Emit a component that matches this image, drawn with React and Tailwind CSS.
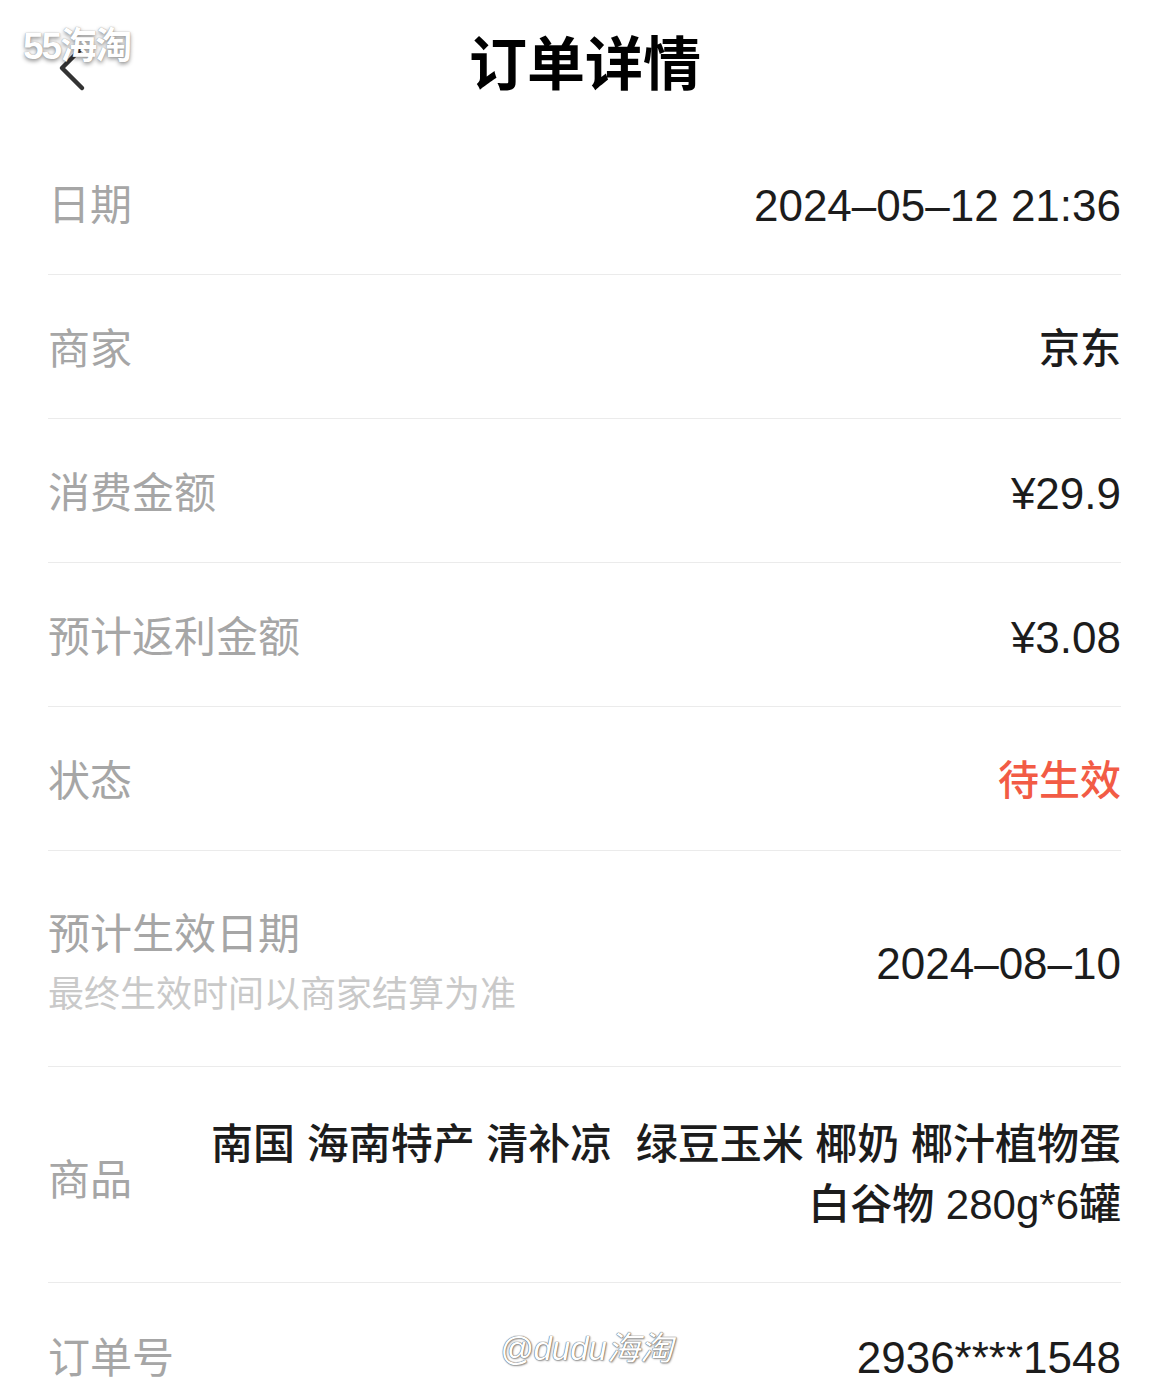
const rows = [
  { label: '日期', value: '2024–05–12 21:36' },
  { label: '商家', value: '京东', cjk: true },
  { label: '消费金额', value: '¥29.9' },
  { label: '预计返利金额', value: '¥3.08' },
  { label: '状态', value: '待生效', red: true, cjk: true },
]

export default function App() {
  return (
    <div
      className="relative w-[1170px] h-[1397px] overflow-hidden bg-white"
      style={{ fontFamily: '"Liberation Sans", "Noto Sans CJK SC", sans-serif' }}
    >
      {/* watermark top-left */}
      <div className="absolute left-[23px] top-[19px] text-[37px] font-bold tracking-[-2px] text-white [text-shadow:0_0_1px_#888,0_2px_4px_rgba(0,0,0,0.45)] z-10">
        55海淘
      </div>

      {/* header */}
      <div className="relative h-[131px] flex items-center justify-center">
        <button className="absolute left-[44px] top-[40px]">
          <svg width="52" height="56" viewBox="0 0 52 56" fill="none">
            <path d="M38 8 L18 28 L38 48" stroke="#333" strokeWidth="4.5" strokeLinecap="round" strokeLinejoin="round" />
          </svg>
        </button>
        <h1 className="text-[58px] font-bold text-black -mt-[2px]">订单详情</h1>
      </div>

      <div className="pl-[48px] pr-[49px]">
        {rows.map(r => (
          <div key={r.label} className="h-[144px] pt-[6px] flex items-center justify-between border-b border-[#ebebeb]">
            <span className="text-[42px] text-[#a6a6a6]">{r.label}</span>
            <span
              className={`font-medium ${r.cjk ? 'text-[41px]' : 'text-[44px]'} ${
                r.red ? 'text-[#f25b45]' : 'text-[#1c1c1c]'
              }`}
            >
              {r.value}
            </span>
          </div>
        ))}

        <div className="h-[216px] flex items-center justify-between border-b border-[#ebebeb]">
          <div className="flex flex-col pt-[12px]">
            <span className="text-[42px] leading-[60px] text-[#a6a6a6]">预计生效日期</span>
            <span className="text-[36px] leading-[60px] text-[#c9c9c9]">最终生效时间以商家结算为准</span>
          </div>
          <span className="text-[44px] font-medium text-[#1c1c1c] pt-[10px]">2024–08–10</span>
        </div>

        <div className="h-[216px] flex items-center justify-between border-b border-[#ebebeb]">
          <span className="text-[42px] text-[#a6a6a6] pt-[12px]">商品</span>
          <div className="text-right text-[42px] font-medium leading-[60px] text-[#1c1c1c] whitespace-pre">
            <div>南国 海南特产 清补凉  绿豆玉米 椰奶 椰汁植物蛋</div>
            <div>白谷物 280g*6罐</div>
          </div>
        </div>

        <div className="h-[144px] pt-[6px] flex items-center justify-between">
          <span className="text-[42px] text-[#a6a6a6]">订单号</span>
          <span className="text-[44px] font-medium text-[#1c1c1c]">2936****1548</span>
        </div>
      </div>

      {/* watermark bottom */}
      <div className="absolute left-[500px] top-[1324px] text-[33px] italic text-white [text-shadow:0_0_1px_#555,0_0_1px_#555,1px_1px_2px_rgba(0,0,0,0.4)]">
        @dudu海淘
      </div>
    </div>
  )
}
